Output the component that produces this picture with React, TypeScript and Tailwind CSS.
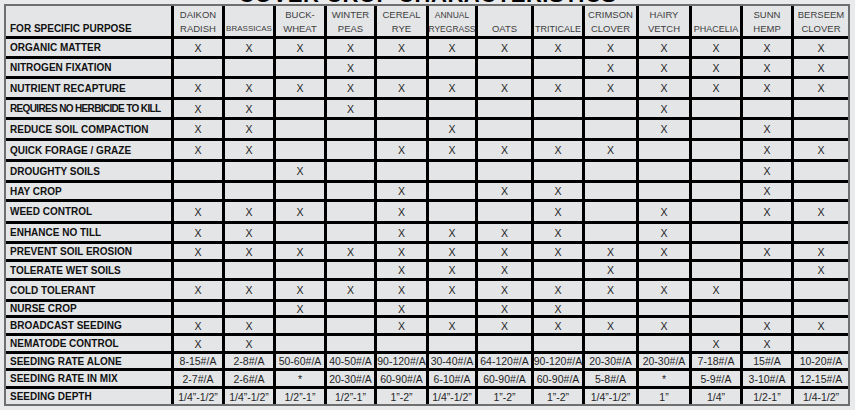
const crops = [
  { lines: ["DAIKON", "RADISH"], size: "text-[9.5px]" },
  { lines: ["BRASSICAS"], size: "text-[8px]" },
  { lines: ["BUCK-", "WHEAT"], size: "text-[9.5px]" },
  { lines: ["WINTER", "PEAS"], size: "text-[9.5px]" },
  { lines: ["CEREAL", "RYE"], size: "text-[9.5px]" },
  { lines: ["ANNUAL", "RYEGRASS"], size: "text-[8.5px]" },
  { lines: ["OATS"], size: "text-[9.5px]" },
  { lines: ["TRITICALE"], size: "text-[9px]" },
  { lines: ["CRIMSON", "CLOVER"], size: "text-[9.5px]" },
  { lines: ["HAIRY", "VETCH"], size: "text-[9.5px]" },
  { lines: ["PHACELIA"], size: "text-[9px]" },
  { lines: ["SUNN", "HEMP"], size: "text-[9.5px]" },
  { lines: ["BERSEEM", "CLOVER"], size: "text-[9.5px]" },
];

// X = checked, . = blank
const purposes = [
  { label: "ORGANIC MATTER", marks: "XXXXXXXXXXXXX" },
  { label: "NITROGEN FIXATION", marks: "...X....XXXXX" },
  { label: "NUTRIENT RECAPTURE", marks: "XXXXXXXXXXXXX" },
  { label: "REQUIRES NO HERBICIDE TO KILL", marks: "XX.X.....X...", tight: true },
  { label: "REDUCE SOIL COMPACTION", marks: "XX...X...X.X." },
  { label: "QUICK FORAGE / GRAZE", marks: "XX..XXXXX..XX" },
  { label: "DROUGHTY SOILS", marks: "..X........X." },
  { label: "HAY CROP", marks: "....X.XX...X." },
  { label: "WEED CONTROL", marks: "XXX.X..X.X.XX" },
  { label: "ENHANCE NO TILL", marks: "XX..XXXX.X..." },
  { label: "PREVENT SOIL EROSION", marks: "XXXXXXXXXX.XX" },
  { label: "TOLERATE WET SOILS", marks: "....XXX.X...X" },
  { label: "COLD TOLERANT", marks: "XXXXXXXXXXX.." },
  { label: "NURSE CROP", marks: "..X.X.XX....." },
  { label: "BROADCAST SEEDING", marks: "XX..XXXXXX.XX" },
  { label: "NEMATODE CONTROL", marks: "XX........XX." },
];

const rates = [
  {
    label: "SEEDING RATE ALONE",
    values: ["8-15#/A", "2-8#/A", "50-60#/A", "40-50#/A", "90-120#/A", "30-40#/A", "64-120#/A", "90-120#/A", "20-30#/A", "20-30#/A", "7-18#/A", "15#/A", "10-20#/A"],
  },
  {
    label: "SEEDING RATE IN MIX",
    values: ["2-7#/A", "2-6#/A", "*", "20-30#/A", "60-90#/A", "6-10#/A", "60-90#/A", "60-90#/A", "5-8#/A", "*", "5-9#/A", "3-10#/A", "12-15#/A"],
  },
  {
    label: "SEEDING DEPTH",
    values: ["1/4\u201d-1/2\u201d", "1/4\u201d-1/2\u201d", "1/2\u201d-1\u201d", "1/2\u201d-1\u201d", "1\u201d-2\u201d", "1/4\u201d-1/2\u201d", "1\u201d-2\u201d", "1\u201d-2\u201d", "1/4\u201d-1/2\u201d", "1\u201d", "1/4\u201d", "1/2-1\u201d", "1/4-1/2\u201d"],
  },
];

const cell = "bg-[#e4e5e7] flex items-center justify-center pt-px";
const labelCell = "bg-[#e4e5e7] flex items-center pl-[4px] pt-px";

export default function App() {
  return (
    <div className="w-[855px] h-[410px] bg-[#e9eaec] overflow-hidden" style={{ fontFamily: '"Liberation Sans", Arial, sans-serif' }}>
      {/* cut-off title */}
      <div className="h-[4px] overflow-hidden flex justify-center">
        <span className="text-[22px] leading-[22px] font-bold text-black -mt-[16px] tracking-wide">COVER CROP CHARACTERISTICS</span>
      </div>

      <div className="ml-[4px] w-[846px] border-2 border-[#6f6f6f]">
        <div className="grid gap-[3px] bg-black grid-cols-[165px_48px_48px_48px_47px_49px_46px_53px_48px_51px_50px_48px_48px_54px] grid-rows-[30px_17px_17px_18px_17px_18px_18px_18px_16px_19px_17px_15px_16px_18px_13px_15px_15px_14px_15px_15px]">
          {/* header */}
          <div className="bg-[#e4e5e7] flex items-end pl-[4px]">
            <span className="text-[10px] leading-[14px] font-bold text-[#111]">FOR SPECIFIC PURPOSE</span>
          </div>
          {crops.map((c, i) => (
            <div key={i} className="bg-[#e4e5e7] flex flex-col justify-end items-center text-[#3d3d3d]">
              {c.lines.map((l, j) => (
                <span key={j} className={`${c.size} leading-[14px] whitespace-nowrap`}>{l}</span>
              ))}
            </div>
          ))}

          {purposes.map((p) => (
            <>
              <div key={p.label} className={labelCell}>
                <span className={`text-[10px] leading-none font-bold text-[#111] whitespace-nowrap ${p.tight ? "tracking-[-0.065em]" : ""}`}>{p.label}</span>
              </div>
              {p.marks.split("").map((m, i) => (
                <div key={p.label + i} className={i === 12 ? cell + " pt-[4px]" : cell}>
                  {m === "X" && <span className="text-[10.5px] leading-none text-[#1f1f1f]">X</span>}
                </div>
              ))}
            </>
          ))}

          {rates.map((r) => (
            <>
              <div key={r.label} className={labelCell}>
                <span className="text-[10px] leading-none font-bold text-[#111] whitespace-nowrap">{r.label}</span>
              </div>
              {r.values.map((v, i) => (
                <div key={r.label + i} className={cell}>
                  <span className="text-[10.5px] leading-none text-[#1f1f1f] whitespace-nowrap">{v}</span>
                </div>
              ))}
            </>
          ))}
        </div>
      </div>
    </div>
  );
}
